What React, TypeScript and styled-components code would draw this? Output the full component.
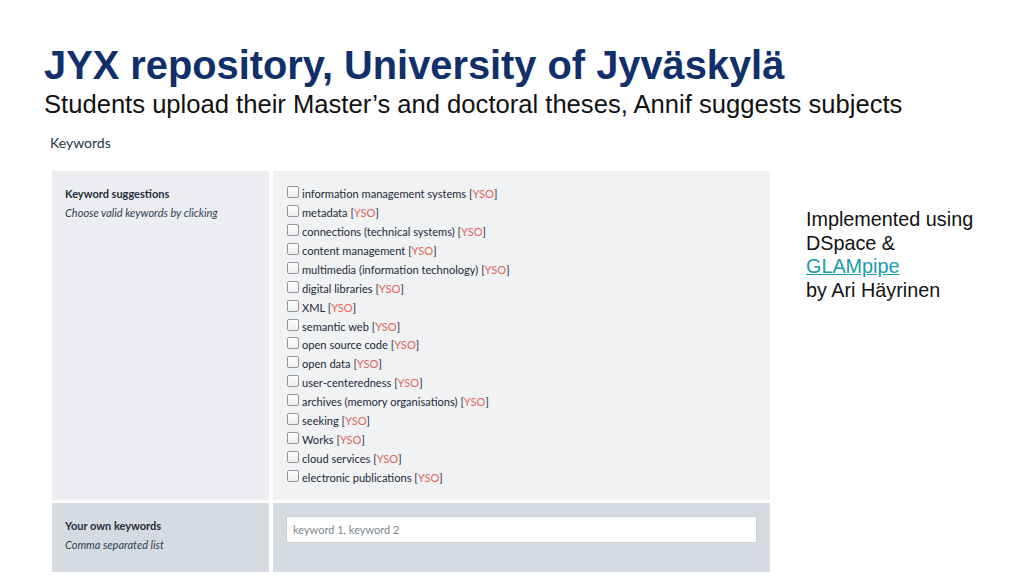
import styled, { createGlobalStyle } from "styled-components";

const GlobalStyle = createGlobalStyle`
    html, body {
        margin: 0;
        padding: 0;
        background: #ffffff;
    }
    * {
        box-sizing: border-box;
    }
`;

const Slide = styled.div`
    width: 1024px;
    height: 576px;
    overflow: hidden;
    padding: 44px 0 0 44px;
    font-family: "Liberation Sans", Arial, sans-serif;
`;

const Title = styled.h1`
    margin: 0;
    font-size: 39.8px;
    line-height: 42px;
    font-weight: 700;
    color: #112f6b;
    white-space: nowrap;
`;

const Subtitle = styled.h2`
    margin: 3px 0 0 0;
    font-size: 25.6px;
    line-height: 30px;
    font-weight: 400;
    color: #111;
    white-space: nowrap;
`;

const Body = styled.div`
    display: flex;
    align-items: flex-start;
    margin-top: 14px;
`;

const Form = styled.div`
    width: 726px;
    margin-left: 6px;
    font-family: Lato, "Open Sans", sans-serif;
    color: #2c3e50;
`;

const Heading = styled.div`
    font-size: 14px;
    line-height: 20px;
    color: #263748;
    margin-bottom: 18px;
`;

const Table = styled.div`
    display: grid;
    grid-template-columns: 217px 497px;
    column-gap: 4px;
    row-gap: 3px;
    margin-left: 2px;
`;

const LabelCell = styled.div<{ $dark?: boolean }>`
    background: ${(p) => (p.$dark ? "#d6dbe1" : "#eceef1")};
    padding: 13px 13px;
`;

const FieldCell = styled.div<{ $dark?: boolean }>`
    background: ${(p) => (p.$dark ? "#d6dbe1" : "#f1f2f4")};
    padding: ${(p) => (p.$dark ? "13px 13px 29px 13px" : "13px 14px 13px 14px")};
`;

const LabelTitle = styled.div`
    font-size: 11px;
    line-height: 19px;
    font-weight: 700;
    color: #1f2e40;
`;

const LabelHint = styled.div`
    font-size: 11px;
    line-height: 19px;
    font-style: italic;
    color: #2f4255;
`;

const List = styled.ul`
    list-style: none;
    margin: 0;
    padding: 0;
`;

const Item = styled.li`
    display: flex;
    align-items: center;
    height: 18.95px;
    font-size: 11.1px;
    color: #1c2a3a;
`;

const Box = styled.span`
    width: 12px;
    height: 12px;
    margin-right: 3px;
    margin-top: -3px;
    border: 1px solid #8e969e;
    border-radius: 2px;
    background: linear-gradient(#ffffff, #eceef0);
    flex-shrink: 0;
`;

const Source = styled.span`
    color: #e0655a;
`;

const Input = styled.input`
    display: block;
    width: 471px;
    height: 27px;
    padding: 0 6px;
    border: 1px solid #cbd0d6;
    border-radius: 2px;
    background: #fff;
    font-family: Lato, "Open Sans", sans-serif;
    font-size: 11px;
    color: #2c3e50;
    &::placeholder {
        color: #80878e;
    }
`;

const Aside = styled.div`
    margin-left: 30px;
    margin-top: 75px;
    font-size: 19.8px;
    line-height: 23.5px;
    color: #111;
    white-space: nowrap;
`;

const ExtLink = styled.a`
    color: #1a9bab;
    text-decoration: underline;
`;

const keywords = [
    "information management systems",
    "metadata",
    "connections (technical systems)",
    "content management",
    "multimedia (information technology)",
    "digital libraries",
    "XML",
    "semantic web",
    "open source code",
    "open data",
    "user-centeredness",
    "archives (memory organisations)",
    "seeking",
    "Works",
    "cloud services",
    "electronic publications",
];

function App() {
    return (
        <>
            <GlobalStyle />
            <Slide>
                <Title>JYX repository, University of Jyväskylä</Title>
                <Subtitle>Students upload their Master’s and doctoral theses, Annif suggests subjects</Subtitle>
                <Body>
                    <Form>
                        <Heading>Keywords</Heading>
                        <Table>
                            <LabelCell>
                                <LabelTitle>Keyword suggestions</LabelTitle>
                                <LabelHint>Choose valid keywords by clicking</LabelHint>
                            </LabelCell>
                            <FieldCell>
                                <List>
                                    {keywords.map((k) => (
                                        <Item key={k}>
                                            <Box />
                                            {k}&nbsp;[<Source>YSO</Source>]
                                        </Item>
                                    ))}
                                </List>
                            </FieldCell>
                            <LabelCell $dark>
                                <LabelTitle>Your own keywords</LabelTitle>
                                <LabelHint>Comma separated list</LabelHint>
                            </LabelCell>
                            <FieldCell $dark>
                                <Input placeholder="keyword 1, keyword 2" />
                            </FieldCell>
                        </Table>
                    </Form>
                    <Aside>
                        Implemented using
                        <br />
                        DSpace &amp;
                        <br />
                        <ExtLink href="#">GLAMpipe</ExtLink>
                        <br />
                        by Ari Häyrinen
                    </Aside>
                </Body>
            </Slide>
        </>
    );
}

export default App;
